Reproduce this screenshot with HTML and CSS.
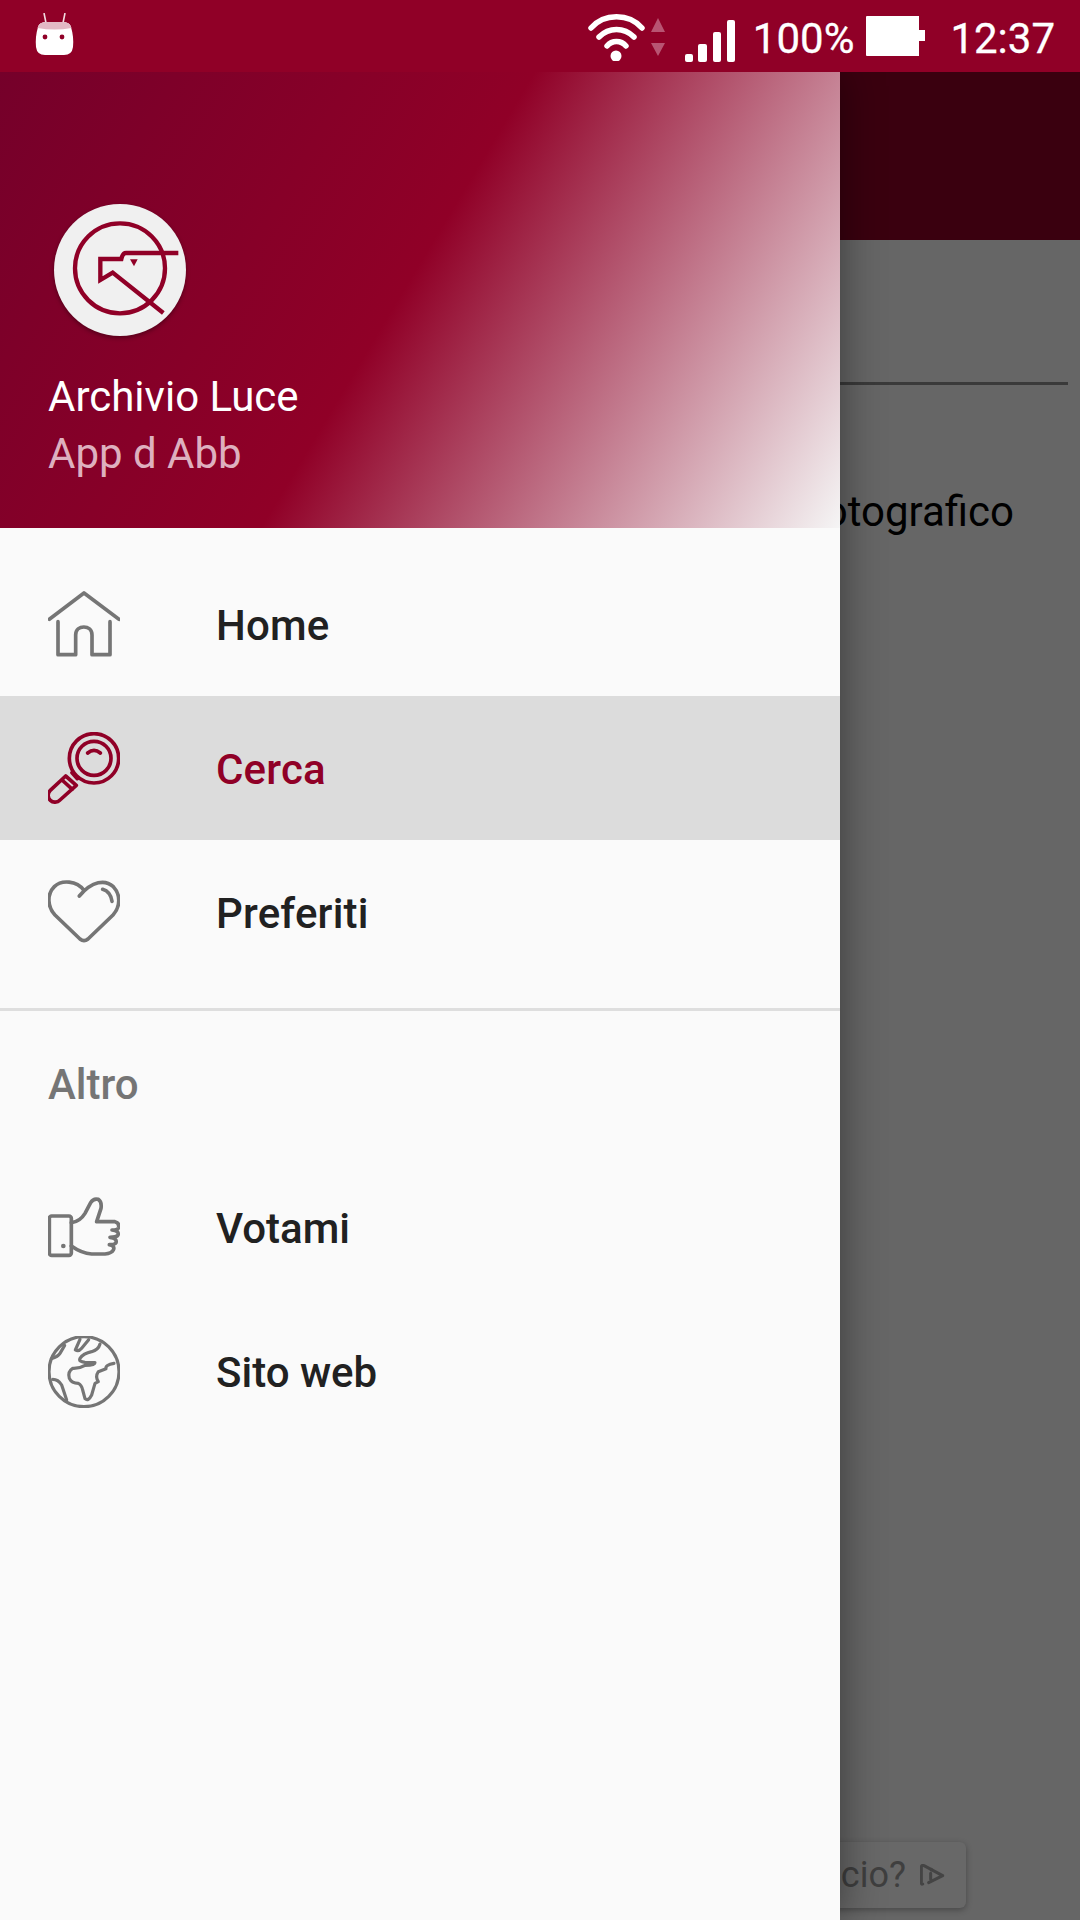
FILE: index.html
```html
<!DOCTYPE html>
<html lang="it">
<head>
<meta charset="utf-8">
<title>Archivio Luce</title>
<link rel="stylesheet" href="styles.css">
</head>
<body>
<div class="page">
  <header class="statusbar">
    <svg class="st-android" viewBox="0 0 39 42" width="39" height="42">
      <path class="st-antenna" d="M11 10 9 0M28 10 30 0"/>
      <path class="st-fill" d="M3 14Q4 9 12 9H27Q35 9 36 14Q39 24 38 34Q37 42 29 42H10Q2 42 1 34Q0 24 3 14Z"/>
      <path class="st-head" d="M3 14Q4 9 12 9H27Q35 9 36 14L36.5 15Q19.500 18 2.500 15Z"/>
      <circle class="st-eye" cx="10" cy="24" r="2.400"/><circle class="st-eye" cx="27" cy="24" r="2.400"/>
    </svg>
    <div class="st-right">
      <svg class="st-wifi" viewBox="0 0 57 47" width="57" height="47">
        <path class="st-arc" d="M3 14C16 -1 41 -1 54 14M11 23C21 13 36 13 46 23M19 32C24 26 33 26 38 32"/>
        <circle class="st-fill" cx="28" cy="42" r="5.500"/>
      </svg>
      <svg class="st-updown" viewBox="0 0 14 38" width="14" height="38">
        <path class="st-dim" d="M7 0 14 14H0ZM0 25H14L7 38Z"/>
      </svg>
      <svg class="st-signal" viewBox="0 0 50 42" width="50" height="42">
        <rect class="st-fill" x="0" y="34" width="8" height="8" rx="2"/>
        <rect class="st-fill" x="13" y="24" width="9" height="18" rx="2"/>
        <rect class="st-fill" x="28" y="12" width="8" height="30" rx="2"/>
        <rect class="st-fill" x="42" y="0" width="8" height="42" rx="2"/>
      </svg>
      <span class="st-text st-pct">100%</span>
      <svg class="st-batt" viewBox="0 0 59 40" width="59" height="40">
        <path class="st-fill" d="M1 0H53V14H59V25H53V40H1Q0 40 0 39V1Q0 0 1 0Z"/>
      </svg>
      <span class="st-text st-time">12:37</span>
    </div>
  </header>

  <div class="app">
    <div class="toolbar"></div>
    <main class="content">
      <div class="rule"></div>
      <p class="headline">Archivio fotografico</p>
      <div class="spacer"></div>
      <div class="hint">
        <span class="hint-text">Annuncio?</span>
        <svg class="hint-icon" viewBox="300 130 75 69" width="25" height="23">
          <path class="hint-stroke" d="M308 190Q304 192 304 186V140Q304 132 312 135L368 165L326 186"/>
          <path class="hint-stroke" d="M332 158V176M334 146V148"/>
        </svg>
      </div>
    </main>
  </div>

  <aside class="drawer">
    <div class="drawer-head">
      <div class="avatar">
        <svg viewBox="162 72 396 396" width="132" height="132">
          <circle class="logo-line" cx="360" cy="265" r="135"/>
          <path class="logo-line" d="M535 219H378Q368 219 364 237H301V300L338 278L490 399"/>
          <path class="logo-fill" d="M390 238H413L402 259Z"/>
        </svg>
      </div>
      <div class="title">Archivio Luce</div>
      <div class="subtitle">App d Abb</div>
    </div>
    <nav class="group group-main">
      <a class="row">
        <svg class="icon" viewBox="54 54 216 216"><path class="ic" d="M58 148 162 69 267 148M84 155V254H137V195C137 163 186 163 186 195V254H240V155"/></svg>
        <span class="label">Home</span>
      </a>
      <a class="row row-active">
        <svg class="icon icon-active" viewBox="54 36 216 216">
          <circle class="ic" cx="192" cy="115" r="74"/><circle class="ic" cx="192" cy="115" r="51"/>
          <path class="ic" d="M173 99Q192 83 211 99M126 158 142 176M107 168 139 196 90 240A20 20 0 0 1 60 212ZM96 180 127 208"/>
        </svg>
        <span class="label label-active">Cerca</span>
      </a>
      <a class="row">
        <svg class="icon" viewBox="54 48 216 216">
          <path class="ic" d="M162 91C140 62 95 58 73 80C50 103 52 140 75 165L150 237Q162 247 174 237L249 165C272 140 272 103 250 80C226 58 187 62 148 108M218 88C232 92 243 105 246 124"/>
        </svg>
        <span class="label">Preferiti</span>
      </a>
    </nav>
    <div class="divider"></div>
    <div class="section">Altro</div>
    <nav class="group">
      <a class="row">
        <svg class="icon" viewBox="54 36 216 216">
          <rect class="ic" x="58" y="108" width="66" height="118" rx="7"/>
          <circle class="ic-dot" cx="100" cy="198" r="7"/>
          <path class="ic" d="M124 128Q150 125 165 100L182 68Q190 54 205 58Q216 65 213 85L200 125H255Q268 128 266 142Q264 150 246 150Q268 152 264 165Q260 172 240 172Q262 175 258 188Q254 194 238 194Q256 198 250 210Q245 220 225 222H185Q155 220 124 198"/>
        </svg>
        <span class="label">Votami</span>
      </a>
      <a class="row">
        <svg class="icon icon-globe" viewBox="54 48 216 216">
          <circle class="ic" cx="162" cy="155" r="105"/>
          <path class="ic" d="M150 58 136 90Q146 96 155 85L176 59M104 76 90 100Q84 110 64 116M210 72Q205 90 185 95Q160 100 150 115Q145 125 165 127L195 128Q195 136 165 136Q148 146 128 145Q112 155 118 175Q125 190 145 190Q155 195 158 210L165 236Q175 245 185 225L195 190 205 185Q195 170 205 155L228 146Q225 135 252 130M68 178Q85 178 95 195L110 240"/>
        </svg>
        <span class="label">Sito web</span>
      </a>
    </nav>
  </aside>
</div>
</body>
</html>
```

FILE: styles.css
```css
* { box-sizing: border-box; }
html, body { margin: 0; padding: 0; }
body { font-family: Roboto, "Liberation Sans", sans-serif; background: #666; }

.page {
  position: relative;
  width: 1080px;
  height: 1920px;
  overflow: hidden;
  display: flex;
  flex-direction: column;
}

/* status bar */
.statusbar {
  position: relative;
  z-index: 3;
  flex: none;
  height: 72px;
  background: #900027;
  display: flex;
  align-items: center;
  justify-content: space-between;
  padding: 0 25px 0 35px;
}
.st-android { margin-top: -4px; }
.st-antenna { fill: none; stroke: #f2dbe1; stroke-width: 1.6; }
.st-right { display: flex; align-items: center; }
.st-fill { fill: #fff; }
.st-head { fill: #e3b9c5; }
.st-eye { fill: #900027; }
.st-arc { fill: none; stroke: #fff; stroke-width: 5.5; stroke-linecap: round; }
.st-dim { fill: #b85472; }
.st-wifi { margin: 3px -1px 0 0; }
.st-updown { margin: 2px 0 0 7px; }
.st-signal { margin: 10px 0 0 20px; align-self: center; }
.st-text { color: #fff; font-size: 42px; line-height: 72px; padding-top: 6px; -webkit-text-stroke: 0.3px #fff; }
.st-pct { margin-left: 18px; }
.st-batt { margin: 0 0 0 12px; flex: none; }
.st-time { margin-left: 25px; }

/* page behind the drawer */
.app { flex: 1; display: flex; flex-direction: column; min-height: 0; }
.toolbar {
  flex: none;
  height: 168px;
  background: #3a000f;
  box-shadow: 0 3px 10px rgba(0, 0, 0, 0.3);
}
.content {
  flex: 1;
  display: flex;
  flex-direction: column;
  min-height: 0;
  background: #666;
  padding: 142px 12px 12px 0;
}
.rule { height: 3px; background: #3a3a3a; }
.headline {
  margin: 99px 54px 0 0;
  font-size: 42px;
  line-height: 56px;
  color: #000;
  text-align: right;
}
.spacer { flex: 1; }
.hint {
  align-self: flex-end;
  margin-right: 102px;
  height: 66px;
  padding: 0 21px 0 24px;
  display: flex;
  align-items: center;
  gap: 14px;
  background: #686868;
  border-radius: 6px;
  box-shadow: 0 2px 6px rgba(0, 0, 0, 0.3);
}
.hint-text { font-size: 36px; color: #3f3f3f; }
.hint-icon { flex: none; }
.hint-stroke { fill: none; stroke: #444; stroke-width: 9; stroke-linecap: round; stroke-linejoin: round; }

/* drawer */
.drawer {
  position: absolute;
  z-index: 2;
  left: 0;
  top: 72px;
  bottom: 0;
  width: 840px;
  background: #fafafa;
  box-shadow: 0 0 40px rgba(0, 0, 0, 0.45);
}
.drawer-head {
  height: 456px;
  padding: 132px 48px 0;
  background: linear-gradient(121deg, #75002a 0%, #900027 48%, #f5f5f5 100%);
}
.avatar {
  width: 132px;
  height: 132px;
  margin-left: 6px;
  border-radius: 50%;
  background: #f0f0f0;
  box-shadow: 0 2px 4px rgba(0, 0, 0, 0.35);
}
.avatar svg { display: block; }
.logo-line { fill: none; stroke: #900027; stroke-width: 13; }
.logo-fill { fill: #900027; }
.title { margin-top: 32px; font-size: 42px; line-height: 57px; color: #fff; }
.subtitle { font-size: 42px; line-height: 57px; color: #deb0bf; }

.group-main { padding: 24px 0; }
.group-main .label { padding-top: 2px; letter-spacing: 0.2px; }
.row {
  display: flex;
  align-items: center;
  height: 144px;
  padding-left: 48px;
}
.row-active { background: #dcdcdc; }
.icon { width: 72px; height: 72px; flex: none; margin-right: 96px; }
.ic { fill: none; stroke: #757575; stroke-width: 11; stroke-linecap: round; stroke-linejoin: round; }
.ic-dot { fill: #757575; }
.icon-active .ic { stroke: #900027; }
.icon-globe .ic { stroke-width: 9.5; }
.label { font-size: 42px; font-weight: 500; color: #212121; }
.label-active { color: #900027; }
.divider { height: 3px; background: #dedede; }
.section {
  height: 145px;
  padding: 2px 0 0 48px;
  display: flex;
  align-items: center;
  font-size: 42px;
  font-weight: 500;
  color: #757575;
}
```
